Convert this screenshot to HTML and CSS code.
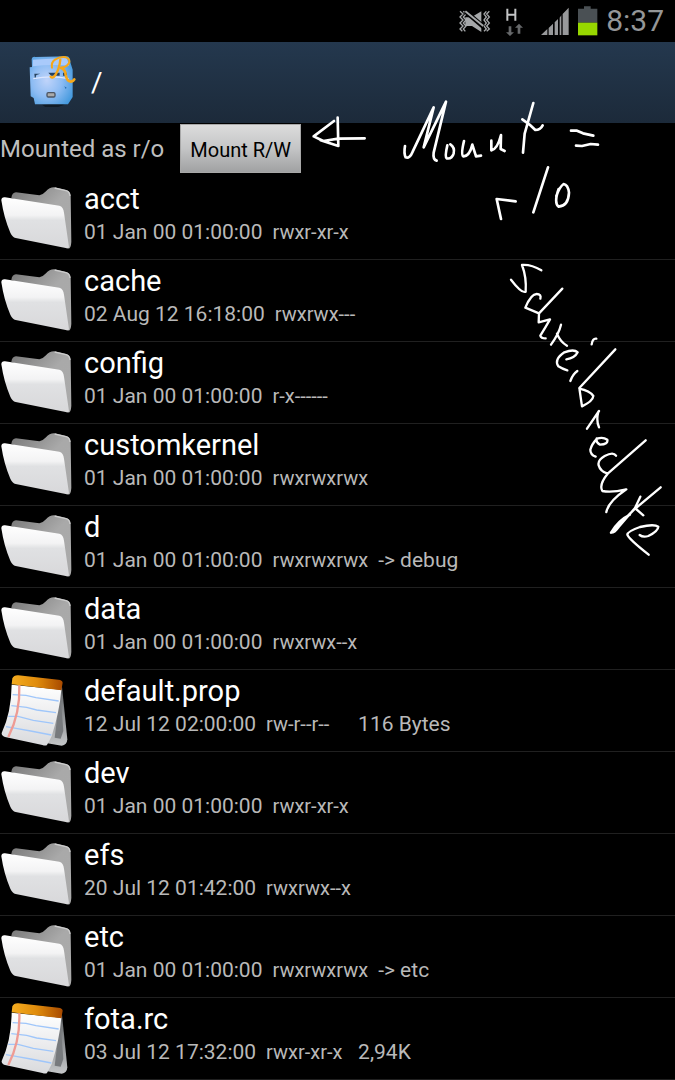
FILE: index.html
```html
<!DOCTYPE html>
<html lang="en">
<head>
<meta charset="utf-8">
<meta name="viewport" content="width=device-width">
<title>Root Explorer</title>
<link rel="stylesheet" href="styles.css">
</head>
<body>
<svg class="defs" aria-hidden="true">
  <defs>
    <linearGradient id="front" x1="0" y1="0" x2="0" y2="1"><stop offset="0" stop-color="#fff"/><stop offset=".35" stop-color="#f3f3f4"/><stop offset=".45" stop-color="#e0e1e3"/><stop offset="1" stop-color="#d8d8da"/></linearGradient>
    <linearGradient id="back" x1="0" y1="0" x2="1" y2="1"><stop offset="0" stop-color="#777"/><stop offset=".5" stop-color="#a9a9a9"/><stop offset="1" stop-color="#aaa"/></linearGradient>
    <linearGradient id="paper" x1="0" y1="0" x2="0" y2="1"><stop offset="0" stop-color="#fff"/><stop offset="1" stop-color="#d9dadd"/></linearGradient>
    <linearGradient id="binding" x1="0" y1="0" x2="1" y2="0"><stop offset="0" stop-color="#f5ad20"/><stop offset=".5" stop-color="#df8b0c"/><stop offset="1" stop-color="#a84a00"/></linearGradient>
    <linearGradient id="stand" x1="0" y1="0" x2="0" y2="1"><stop offset="0" stop-color="#606366"/><stop offset="1" stop-color="#c4c6c8"/></linearGradient>
    <radialGradient id="cabinet" cx=".4" cy=".5" r=".7"><stop offset="0" stop-color="#c0d4fa"/><stop offset=".5" stop-color="#8dbcf3"/><stop offset="1" stop-color="#3f97dc"/></radialGradient>
  </defs>
  <symbol id="folder" viewBox="0 -6 240 246">
    <path d="M34 54Q36 38 48 37L118 46Q129 44 138 34Q148 22 162 22L198 30Q211 33 212 48L214 185Q213 205 205 206L185 110Z" fill="url(#back)"/>
    <path d="M164 24L198 32Q209 35 210 48" fill="none" stroke="#ccc" stroke-width="4"/>
    <path d="M4 61Q4 51 15 52L178 77Q190 80 192 98L207 202Q205 207 197 204L47 174Q37 171 31 158Q12 115 4 61Z" fill="url(#front)"/>
  </symbol>
  <symbol id="note" viewBox="0 15 240 246">
    <path d="M186 65L202 223Q201 241 185 242L142 235L175 75Z" fill="url(#stand)"/>
    <path d="M181 80L164 218L182 221L190 198Z" fill="#777a7d"/>
    <path d="M35 59L184 74Q179 137 155 214L141 240Q137 243 127 240L15 216Q4 212 5 204Q34 142 35 59Z" fill="url(#paper)"/>
    <path d="M38 89L78 91 108 98 176 108M34 122L80 127 110 135 168 143M25 154L54 154 100 166 160 175M18 185L48 190 92 198 154 210" fill="none" stroke="#9fc6fa" stroke-width="4"/>
    <path d="M58 60Q61 145 25 216" fill="none" stroke="#ee9b94" stroke-width="7"/>
    <path d="M35 58L37 40Q42 30 55 31L175 44Q187 45 188 53L184 76Z" fill="url(#binding)"/>
  </symbol>
</svg>

<div class="screen">
  <div class="status">
    <svg class="status-icons" viewBox="0 0 480 132" role="img" aria-label="Silent, H data, signal, battery">
      <g fill="none" stroke="#a5a7a9" stroke-width="4">
        <path d="M60 34l9 8-9 9 9 9-9 9 9 9-9 9 7 7M70 34l8 8-8 9 8 9-8 9 8 9-8 9 6 7M139 34l-7 8 7 9-7 9 7 9-7 9 7 9-7 7M148 34l-8 8 8 9-8 9 8 9-8 9 8 9-8 7"/>
      </g>
      <path d="M76 52h18l30-18v62L96 78H76Z" fill="#a5a7a9"/>
      <path d="M76 34L130 80" stroke="#000" stroke-width="14"/>
      <path d="M76 34L130 78" stroke="#a5a7a9" stroke-width="6"/>
      <path d="M202 26v36M226 26v36M202 44h24" fill="none" stroke="#c4c5c6" stroke-width="6"/>
      <path d="M206 79h8v18h8l-12 11-12-11h8ZM233 101h8V83h8l-12-12-12 12h8Z" fill="#66686a"/>
      <path d="M303 105L322 87V105ZM326 84L339 71V105H326ZM344 67L354 57V105H344ZM359 53L364 46V105H359ZM368 42L386 23V105H368Z" fill="#98999b"/>
      <path d="M414 26h18v-7h20v7h20v42h-58Z" fill="#4a5054"/>
      <path d="M414 68h58v38h-58Z" fill="#97d700"/>
    </svg>
    <time class="clock">8:37</time>
  </div>

  <header class="header">
    <svg class="logo" viewBox="0 0 150 162" role="img" aria-label="Root Explorer">
      <path d="M45 155l50-5 18 5-20 7H55Z" fill="#111b25"/>
      <path d="M14 18Q16 10 25 12L122 10Q130 14 130 28L137 50V132L123 154H24L20 135L11 130L8 43L15 42Z" fill="url(#cabinet)"/>
      <path d="M18 20L120 14L126 38Q70 33 18 40Z" fill="#a9cafb"/>
      <path d="M22 62h18l-12 4-4 14ZM64 59h34v9H72ZM108 59h12v9H108Z" fill="#27425d"/>
      <path d="M19 77Q75 66 125 77" fill="none" stroke="#dce7ff" stroke-width="4"/>
      <rect x="60" y="119" width="24" height="13" rx="4" fill="#aaa" stroke="#4c5561" stroke-width="4"/>
      <path d="M112 100l7 4-3 4Z" fill="#226aac"/>
      <g fill="none" stroke="#f6a719" stroke-linecap="round" stroke-linejoin="round">
        <path d="M75 44Q72 28 84 20Q100 10 117 13Q132 19 125 32Q117 44 101 44" stroke-width="6"/>
        <path d="M100 20Q97 49 85 66Q77 78 71 71" stroke-width="7"/>
        <path d="M102 45Q115 49 116 65Q119 85 132 86Q139 85 142 79" stroke-width="8"/>
      </g>
    </svg>
    <h1 class="path">/</h1>
  </header>

  <div class="mount">
    <span>Mounted as r/o</span>
    <button class="mount-button" type="button">Mount R/W</button>
  </div>

  <ul class="list">
    <li class="row"><svg class="icon" aria-hidden="true"><use href="#folder"/></svg><div><div class="name">acct</div><div class="meta"><span>01 Jan 00 01:00:00</span><span class="mode">rwxr-xr-x</span></div></div></li>
    <li class="row"><svg class="icon" aria-hidden="true"><use href="#folder"/></svg><div><div class="name">cache</div><div class="meta"><span>02 Aug 12 16:18:00</span><span class="mode">rwxrwx---</span></div></div></li>
    <li class="row"><svg class="icon" aria-hidden="true"><use href="#folder"/></svg><div><div class="name">config</div><div class="meta"><span>01 Jan 00 01:00:00</span><span class="mode">r-x------</span></div></div></li>
    <li class="row"><svg class="icon" aria-hidden="true"><use href="#folder"/></svg><div><div class="name">customkernel</div><div class="meta"><span>01 Jan 00 01:00:00</span><span class="mode">rwxrwxrwx</span></div></div></li>
    <li class="row"><svg class="icon" aria-hidden="true"><use href="#folder"/></svg><div><div class="name">d</div><div class="meta"><span>01 Jan 00 01:00:00</span><span class="mode">rwxrwxrwx</span><span>-&gt; debug</span></div></div></li>
    <li class="row"><svg class="icon" aria-hidden="true"><use href="#folder"/></svg><div><div class="name">data</div><div class="meta"><span>01 Jan 00 01:00:00</span><span class="mode">rwxrwx--x</span></div></div></li>
    <li class="row"><svg class="icon" aria-hidden="true"><use href="#note"/></svg><div><div class="name">default.prop</div><div class="meta"><span>12 Jul 12 02:00:00</span><span class="mode">rw-r--r--</span><span>116 Bytes</span></div></div></li>
    <li class="row"><svg class="icon" aria-hidden="true"><use href="#folder"/></svg><div><div class="name">dev</div><div class="meta"><span>01 Jan 00 01:00:00</span><span class="mode">rwxr-xr-x</span></div></div></li>
    <li class="row"><svg class="icon" aria-hidden="true"><use href="#folder"/></svg><div><div class="name">efs</div><div class="meta"><span>20 Jul 12 01:42:00</span><span class="mode">rwxrwx--x</span></div></div></li>
    <li class="row"><svg class="icon" aria-hidden="true"><use href="#folder"/></svg><div><div class="name">etc</div><div class="meta"><span>01 Jan 00 01:00:00</span><span class="mode">rwxrwxrwx</span><span>-&gt; etc</span></div></div></li>
    <li class="row"><svg class="icon" aria-hidden="true"><use href="#note"/></svg><div><div class="name">fota.rc</div><div class="meta"><span>03 Jul 12 17:32:00</span><span class="mode">rwxr-xr-x</span><span>2,94K</span></div></div></li>
  </ul>

  <svg class="ink" viewBox="0 0 1125 1410" role="img" aria-label="Handwritten: Mount = r/o Schreibrechte">
    <g stroke-width="8">
      <path d="M113 68L115 153L62 136M102 78L41 124L70 138L115 131L194 130"/>
      <path d="M315 153Q311 175 317 187Q329 192 338 170L401 37L371 157L438 20L401 173Q398 194 410 197"/>
      <path d="M442 151Q434 185 440 190Q456 193 461 175Q465 157 451 148M492 138Q482 180 490 184Q508 185 517 149L528 184L543 182M574 137V166Q592 163 603 120L602 162L614 168"/>
      <path d="M700 24L674 116L669 173M667 73Q690 88 706 105Q721 105 728 91M813 107L831 107 849 115 880 122M828 152L846 153 872 147 894 149"/>
      <path d="M590 312L603 372M590 312L647 319M744 217L700 352M776 282Q761 324 776 335Q805 333 807 293Q804 269 791 267Q779 275 769 303"/>
    </g>
    <g transform="translate(600 465)" stroke-width="7">
      <path d="M124 61Q94 43 66 45Q80 82 77 125Q66 132 33 89M121 146Q125 132 110 132Q93 132 76 173L117 190L187 116M117 190L116 217L150 208Q137 231 121 257Q123 265 137 265M183 224Q177 250 153 284M171 251Q181 276 201 287"/>
      <path d="M199 328Q224 325 233 307Q222 296 193 307Q161 329 175 349Q187 357 202 361M232 363Q218 373 211 393M289 266Q278 264 275 283M346 298L238 414L246 469Q279 453 280 438Q269 422 238 416"/>
    </g>
    <g transform="translate(720 885)" stroke-width="7">
      <path d="M177 63L141 116M175 65Q168 92 177 112M170 145Q166 156 180 164Q205 163 202 149Q189 140 171 146Q155 163 151 179Q151 194 167 200M228 197Q220 184 194 198Q172 211 176 226Q181 244 203 251L317 151M203 251Q176 284 187 303Q214 309 259 298Q205 335 199 366"/>
      <path d="M301 320L285 354L310 376M362 292L282 359L213 428Q223 429 236 411L285 354M213 428Q236 390 270 374M299 435Q309 443 325 438Q354 424 355 410Q342 401 300 411Q262 424 262 434Q266 447 326 494"/>
    </g>
  </svg>
</div>
</body>
</html>
```

FILE: styles.css
```css
* { box-sizing: border-box; }
body {
  margin: 0;
  background: #000;
  color: #fff;
  font-family: Roboto, sans-serif;
}
.defs { position: absolute; width: 0; height: 0; }
.screen { position: relative; overflow: hidden; }
.status {
  display: flex;
  justify-content: flex-end;
  height: 42px;
  padding-right: 11px;
}
.status-icons { width: 160px; height: 44px; }
.clock {
  margin-left: 6px;
  color: #949698;
  font-size: 30px;
  line-height: 42px;
}
.header {
  display: flex;
  align-items: center;
  height: 81px;
  padding-left: 27px;
  background: linear-gradient(#24384e, #1c2a3a);
}
.logo { width: 50px; height: 54px; margin-bottom: 6px; }
.path {
  margin: 0 0 0 14px;
  font-size: 28px;
  font-weight: 400;
  line-height: 32px;
}
.mount {
  display: flex;
  align-items: center;
  gap: 16px;
  height: 55px;
  padding-bottom: 4px;
  color: #bebebe;
  font-size: 24px;
}
.mount-button {
  height: 49px;
  padding: 2px 9px 0;
  border: 1px solid #a8a8a8;
  border-radius: 0;
  background: linear-gradient(#dcdcdc, #c4c5c6 50%, #a0a1a2);
  color: #000;
  font: 20px Roboto, sans-serif;
}
.list { margin: 0; padding: 0; list-style: none; }
.row {
  display: flex;
  gap: 4px;
  height: 82px;
  border-bottom: 1px solid #202020;
}
.icon { flex: none; width: 80px; height: 82px; }
.name { padding-top: 4px; font-size: 29px; line-height: 34px; }
.meta {
  display: flex;
  gap: 10px;
  color: #b9b9b9;
  font-size: 21px;
  line-height: 32px;
  white-space: nowrap;
}
.mode { min-width: 82px; font-size: 20px; }
.ink {
  position: absolute;
  top: 95px;
  left: 300px;
  width: 375px;
  height: 470px;
  fill: none;
  stroke: #fff;
  stroke-linecap: round;
  stroke-linejoin: round;
  pointer-events: none;
}
```
